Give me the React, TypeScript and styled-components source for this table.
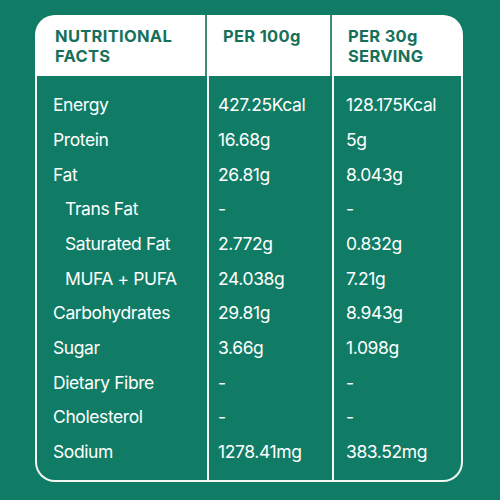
import React from "react";
import styled, { createGlobalStyle } from "styled-components";

const GlobalStyle = createGlobalStyle`
  html, body { margin: 0; padding: 0; }
  body {
    width: 500px;
    height: 500px;
    background: #107c65;
    font-family: Inter, "Noto Sans", sans-serif;
  }
`;

type Row = { label: string; per100: string; serving: string; sub?: boolean };

const rows: Row[] = [
  { label: "Energy", per100: "427.25Kcal", serving: "128.175Kcal" },
  { label: "Protein", per100: "16.68g", serving: "5g" },
  { label: "Fat", per100: "26.81g", serving: "8.043g" },
  { label: "Trans Fat", per100: "-", serving: "-", sub: true },
  { label: "Saturated Fat", per100: "2.772g", serving: "0.832g", sub: true },
  { label: "MUFA + PUFA", per100: "24.038g", serving: "7.21g", sub: true },
  { label: "Carbohydrates", per100: "29.81g", serving: "8.943g" },
  { label: "Sugar", per100: "3.66g", serving: "1.098g" },
  { label: "Dietary Fibre", per100: "-", serving: "-" },
  { label: "Cholesterol", per100: "-", serving: "-" },
  { label: "Sodium", per100: "1278.41mg", serving: "383.52mg" },
];

const Page = styled.div`
  padding: 15px 0 0 35px;
`;

const Card = styled.div`
  width: 428px;
  height: 467px;
  display: flex;
  flex-direction: column;
`;

const cols = "170px 125px 133px";

const Header = styled.div`
  display: grid;
  grid-template-columns: ${cols};
  height: 62px;
  background: #ffffff;
  border-radius: 20px 20px 0 0;
`;

const HeadCell = styled.div<{ $first?: boolean }>`
  padding: 11px 0 0 ${(p) => (p.$first ? "20px" : "16px")};
  border-left: ${(p) => (p.$first ? "none" : "2px solid #3d8c77")};
  color: #17705a;
  font-weight: 700;
  font-size: 16.5px;
  line-height: 20px;
  letter-spacing: 0.3px;
`;

const Body = styled.div`
  flex: 1;
  display: grid;
  grid-template-columns: ${cols};
  border: 2px solid #f2f7f4;
  border-top: none;
  border-radius: 0 0 20px 20px;
  padding: 10px 0 12px;
`;

const Column = styled.div<{ $first?: boolean }>`
  display: flex;
  flex-direction: column;
  border-left: ${(p) => (p.$first ? "none" : "2px solid #f2f7f4")};
  margin: -10px 0 -12px;
  padding: 11px 0 11px;
`;

const Cell = styled.div<{ $indent?: number }>`
  height: 34.7px;
  display: flex;
  align-items: center;
  padding-left: ${(p) => p.$indent ?? 16}px;
  color: #ffffff;
  font-size: 17.5px;
  letter-spacing: -0.4px;
  white-space: nowrap;
`;

export default function App() {
  return (
    <>
      <GlobalStyle />
      <Page>
        <Card>
          <Header>
            <HeadCell $first>NUTRITIONAL<br />FACTS</HeadCell>
            <HeadCell>PER 100g</HeadCell>
            <HeadCell>PER 30g<br />SERVING</HeadCell>
          </Header>
          <Body>
            <Column $first>
              {rows.map((r) => (
                <Cell key={r.label} $indent={r.sub ? 28 : 16}>{r.label}</Cell>
              ))}
            </Column>
            <Column>
              {rows.map((r) => (
                <Cell key={r.label} $indent={9}>{r.per100}</Cell>
              ))}
            </Column>
            <Column>
              {rows.map((r) => (
                <Cell key={r.label} $indent={12}>{r.serving}</Cell>
              ))}
            </Column>
          </Body>
        </Card>
      </Page>
    </>
  );
}
